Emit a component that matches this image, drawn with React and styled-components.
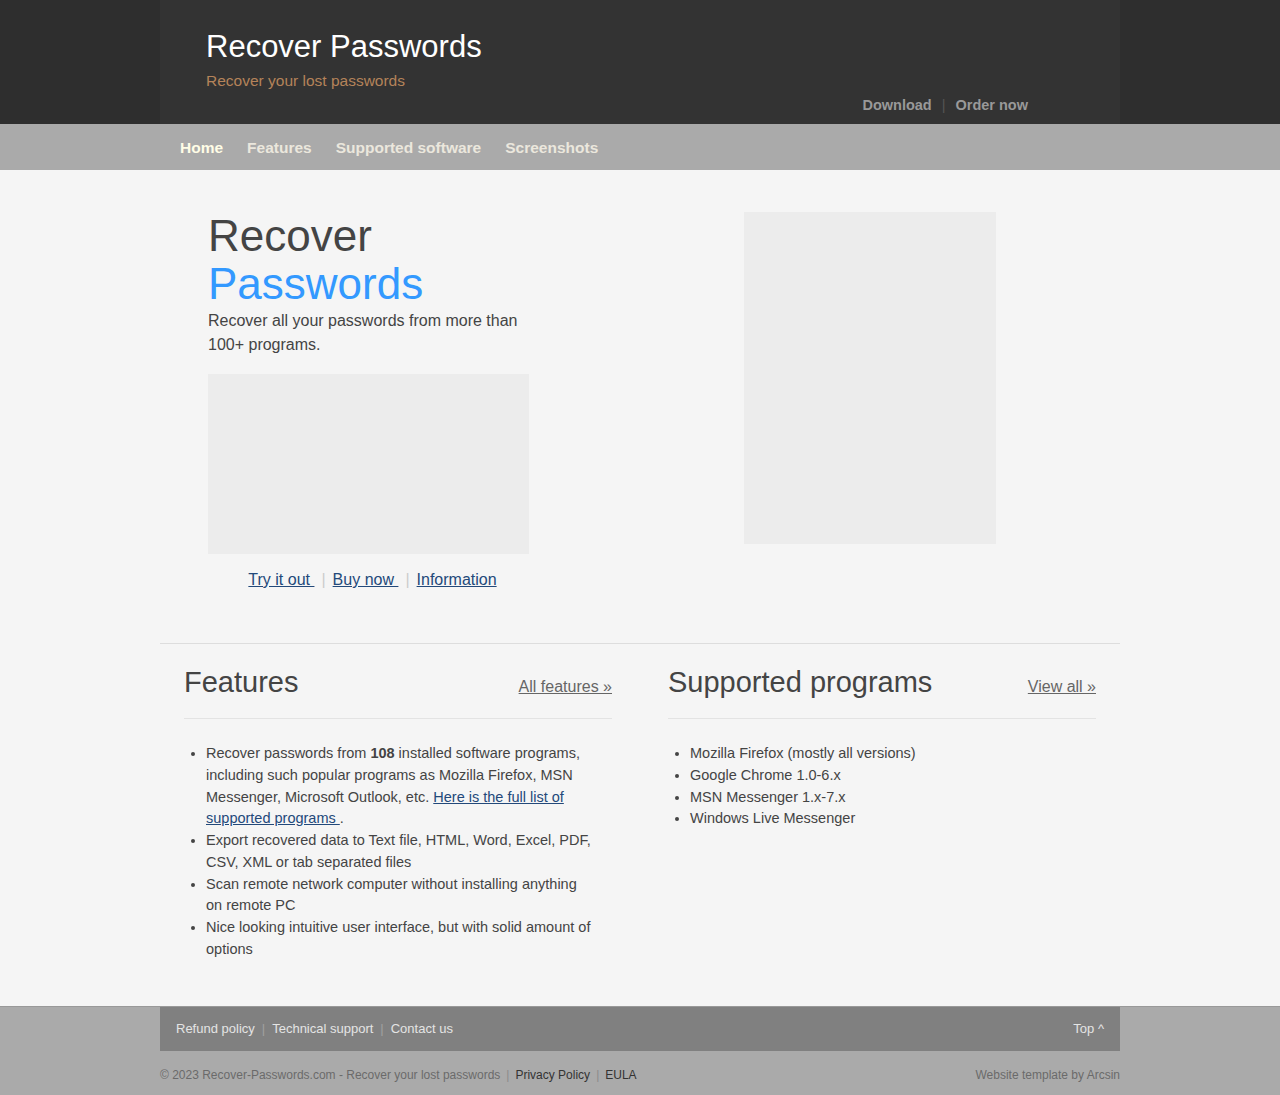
import React from "react";
import styled, { createGlobalStyle } from "styled-components";

const GlobalStyle = createGlobalStyle`
  html, body {
    margin: 0;
    padding: 0;
    background: #f5f5f5;
    font-family: "Liberation Sans", Arial, sans-serif;
    color: #444;
  }
`;

// Header
const HeaderBar = styled.header`
  background: #2e2e2e;
`;

const HeaderInner = styled.div`
  width: 960px;
  margin: 0 auto;
  height: 124px;
  box-sizing: border-box;
  background: #333;
  padding: 28px 92px 9px 46px;
  display: flex;
  justify-content: space-between;
  align-items: flex-end;
`;

const Brand = styled.div`
  align-self: flex-start;
`;

const SiteTitle = styled.h1`
  margin: 0;
  font-size: 31px;
  line-height: 38px;
  font-weight: normal;
  color: #fff;
`;

const Tagline = styled.div`
  margin-top: 5px;
  font-size: 15.5px;
  line-height: 20px;
  color: #b5835a;
`;

const TopLinks = styled.nav`
  display: flex;
  align-items: center;
  font-size: 14.5px;
  line-height: 20px;
  font-weight: bold;
`;

const TopLink = styled.a`
  color: #999;
  text-decoration: none;
`;

const Pipe = styled.span`
  color: ${(p) => p.$color || "#555"};
  margin: 0 ${(p) => p.$space || 10}px;
  font-weight: normal;
`;

// Main navigation
const NavBar = styled.nav`
  background: #aaa;
`;

const NavInner = styled.ul`
  width: 960px;
  margin: 0 auto;
  box-sizing: border-box;
  padding: 0 0 0 8px;
  list-style: none;
  height: 46px;
  display: flex;
  align-items: center;
`;

const NavItem = styled.li`
  padding: 2px 12px 0;
  font-size: 15.5px;
  font-weight: bold;
  color: ${(p) => (p.$active ? "#fffde6" : "#ebe7dd")};
`;

// Hero
const Main = styled.main`
  width: 960px;
  margin: 0 auto;
`;

const Hero = styled.section`
  display: flex;
  padding: 42px 0 51px 48px;
  border-bottom: 1px solid #ddd;
`;

const HeroText = styled.div`
  width: 321px;
`;

const HeroTitle = styled.h2`
  margin: 0;
  font-size: 44px;
  line-height: 48px;
  font-weight: normal;
  color: #444;
`;

const Accent = styled.span`
  display: block;
  color: #3399ff;
`;

const Lead = styled.p`
  margin: 1px 0 17px;
  font-size: 16px;
  line-height: 24px;
  color: #444;
`;

const Placeholder = styled.div`
  width: ${(p) => p.$w}px;
  height: ${(p) => p.$h}px;
  background: #ececec;
  flex-shrink: 0;
`;

const HeroLinks = styled.div`
  margin-top: 14px;
  padding-left: 8px;
  text-align: center;
  font-size: 16px;
  line-height: 24px;
`;

const TextLink = styled.a`
  color: #23497a;
  text-decoration: underline;
`;

const HeroAside = styled.div`
  margin-left: 215px;
`;

// Columns
const Columns = styled.section`
  display: grid;
  grid-template-columns: 1fr 1fr;
  column-gap: 56px;
  padding: 21px 24px 45px;
`;

const ColumnHead = styled.div`
  display: flex;
  justify-content: space-between;
  align-items: baseline;
  padding-bottom: 19px;
  border-bottom: 1px solid #e3e3e3;
`;

const ColumnTitle = styled.h3`
  margin: 0;
  font-size: 29px;
  line-height: 34px;
  font-weight: normal;
  color: #444;
`;

const MoreLink = styled.a`
  font-size: 16px;
  color: #666;
  text-decoration: underline;
`;

const List = styled.ul`
  margin: 24px 0 0;
  padding: 0 16px 0 22px;
  font-size: 14.5px;
  line-height: 1.5;
`;

// Footer
const Footer = styled.footer`
  background: #aaa;
  border-top: 1px solid #999;
`;

const FooterBar = styled.div`
  width: 960px;
  margin: 0 auto;
  box-sizing: border-box;
  height: 44px;
  background: #808080;
  padding: 0 16px;
  display: flex;
  align-items: center;
  justify-content: space-between;
  font-size: 13px;
  color: #e4e4e4;
`;

const FooterLinks = styled.div`
  display: flex;
  align-items: center;
`;

const FooterBottom = styled.div`
  width: 960px;
  margin: 0 auto;
  height: 48px;
  display: flex;
  align-items: center;
  justify-content: space-between;
  font-size: 12px;
  color: #6a6a6a;
`;

const Dark = styled.span`
  color: #333;
`;

const App = () => {
  return (
    <>
      <GlobalStyle />
      <HeaderBar>
        <HeaderInner>
          <Brand>
            <SiteTitle>Recover Passwords</SiteTitle>
            <Tagline>Recover your lost passwords</Tagline>
          </Brand>
          <TopLinks>
            <TopLink>Download</TopLink>
            <Pipe $space={10}>|</Pipe>
            <TopLink>Order now</TopLink>
          </TopLinks>
        </HeaderInner>
      </HeaderBar>

      <NavBar>
        <NavInner>
          <NavItem $active>Home</NavItem>
          <NavItem>Features</NavItem>
          <NavItem>Supported software</NavItem>
          <NavItem>Screenshots</NavItem>
        </NavInner>
      </NavBar>

      <Main>
        <Hero>
          <HeroText>
            <HeroTitle>
              Recover
              <Accent>Passwords</Accent>
            </HeroTitle>
            <Lead>Recover all your passwords from more than 100+ programs.</Lead>
            <Placeholder $w={321} $h={180} />
            <HeroLinks>
              <TextLink>Try it out </TextLink>
              <Pipe $color="#ccc" $space={7}>|</Pipe>
              <TextLink>Buy now </TextLink>
              <Pipe $color="#ccc" $space={7}>|</Pipe>
              <TextLink>Information</TextLink>
            </HeroLinks>
          </HeroText>
          <HeroAside>
            <Placeholder $w={252} $h={332} />
          </HeroAside>
        </Hero>

        <Columns>
          <div>
            <ColumnHead>
              <ColumnTitle>Features</ColumnTitle>
              <MoreLink>All features »</MoreLink>
            </ColumnHead>
            <List>
              <li>
                Recover passwords from <b>108</b> installed software programs,
                including such popular programs as Mozilla Firefox, MSN
                Messenger, Microsoft Outlook, etc.{" "}
                <TextLink>Here is the full list of supported programs </TextLink>.
              </li>
              <li>
                Export recovered data to Text file, HTML, Word, Excel, PDF, CSV,
                XML or tab separated files
              </li>
              <li>Scan remote network computer without installing anything on remote PC</li>
              <li>Nice looking intuitive user interface, but with solid amount of options</li>
            </List>
          </div>
          <div>
            <ColumnHead>
              <ColumnTitle>Supported programs</ColumnTitle>
              <MoreLink>View all »</MoreLink>
            </ColumnHead>
            <List>
              <li>Mozilla Firefox (mostly all versions)</li>
              <li>Google Chrome 1.0-6.x</li>
              <li>MSN Messenger 1.x-7.x</li>
              <li>Windows Live Messenger</li>
            </List>
          </div>
        </Columns>
      </Main>

      <Footer>
        <FooterBar>
          <FooterLinks>
            <span>Refund policy</span>
            <Pipe $color="#a0a0a0" $space={7}>|</Pipe>
            <span>Technical support</span>
            <Pipe $color="#a0a0a0" $space={7}>|</Pipe>
            <span>Contact us</span>
          </FooterLinks>
          <span>Top ^</span>
        </FooterBar>
        <FooterBottom>
          <div>
            © 2023 Recover-Passwords.com - Recover your lost passwords
            <Pipe $color="#8a8a8a" $space={6}>|</Pipe>
            <Dark>Privacy Policy</Dark>
            <Pipe $color="#8a8a8a" $space={6}>|</Pipe>
            <Dark>EULA</Dark>
          </div>
          <div>Website template by Arcsin</div>
        </FooterBottom>
      </Footer>
    </>
  );
};

export default App;
